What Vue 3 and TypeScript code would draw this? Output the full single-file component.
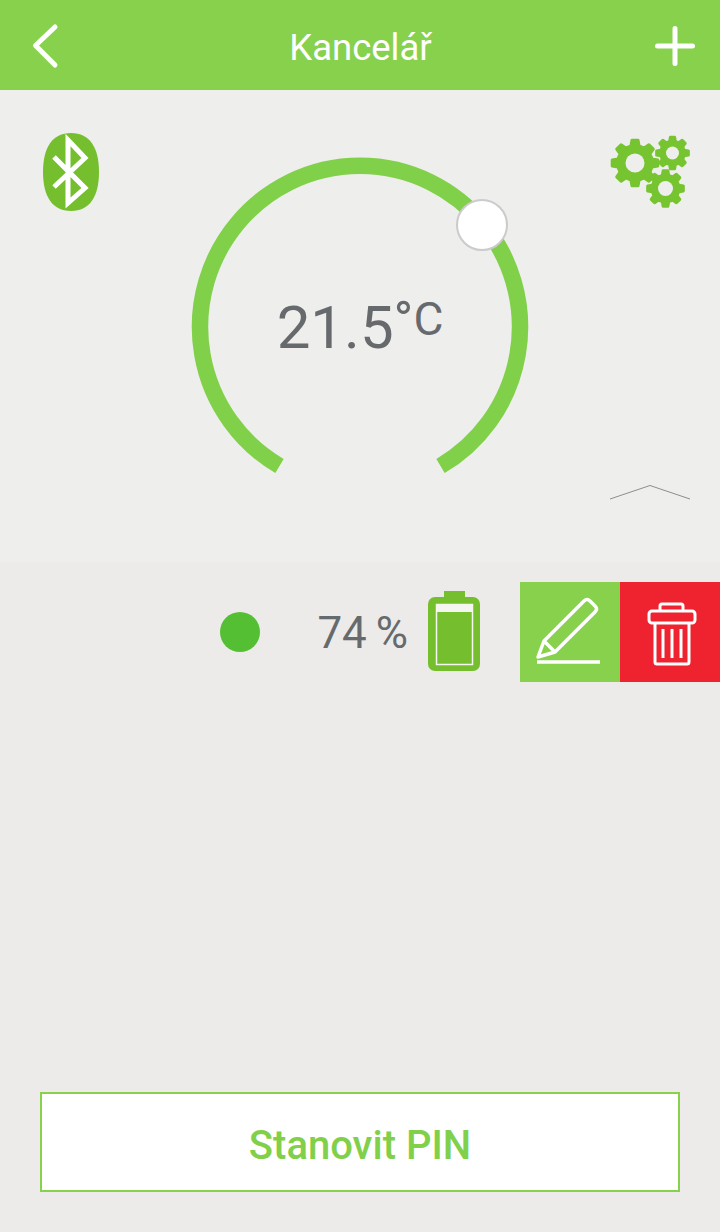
<script setup lang="ts">
// builds a cog outline with flat-topped teeth, hole is added by the caller
function gearPath(cx: number, cy: number, outer: number, root: number, teeth: number): string {
  const step = (Math.PI * 2) / teeth;
  const pts: string[] = [];
  for (let i = 0; i < teeth; i++) {
    const a = i * step - Math.PI / 2;
    const offsets: [number, number][] = [
      [-0.3, root],
      [-0.17, outer],
      [0.17, outer],
      [0.3, root],
    ];
    for (const [off, r] of offsets) {
      const t = a + off * step;
      pts.push(`${(cx + Math.cos(t) * r).toFixed(2)} ${(cy + Math.sin(t) * r).toFixed(2)}`);
    }
  }
  return `M${pts.join('L')}Z`;
}

const gears = [
  { x: 25, y: 28, outer: 23, root: 17.5, hole: 9.5 },
  { x: 62.5, y: 18, outer: 16, root: 12, hole: 6.5 },
  { x: 55.5, y: 53.5, outer: 18, root: 13.5, hole: 7.5 },
].map((g) => ({ ...g, d: gearPath(g.x, g.y, g.outer, g.root, 8) }));
</script>

<template>
  <div class="screen">
    <header class="topbar">
      <svg class="topbar-icon" width="40" height="50" viewBox="0 0 40 50">
        <path d="M33 5 13.5 23.5 33 43" fill="none" stroke="#fff" stroke-width="5" stroke-linecap="round" stroke-linejoin="round" />
      </svg>
      <h1 class="title">Kancelář</h1>
      <svg class="topbar-icon" width="40" height="50" viewBox="0 0 40 50">
        <path d="M20 6.5v35M2.5 24h35" fill="none" stroke="#fff" stroke-width="5" stroke-linecap="round" />
      </svg>
    </header>

    <section class="thermostat">
      <svg class="bluetooth" width="58" height="80" viewBox="0 0 58 80">
        <path d="M29 1C48 1 57 16 57 40C57 64 48 79 29 79C10 79 1 64 1 40C1 16 10 1 29 1Z" fill="#75bf2e" />
        <path d="M12 25 43 56 26 71V8L43 26 12 55" fill="none" stroke="#fff" stroke-width="5" />
      </svg>

      <div class="dial">
        <svg width="360" height="340" viewBox="0 0 360 340">
          <path d="M99.5 316A160 161 0 1 1 260.5 316" fill="none" stroke="#81d04a" stroke-width="16.5" />
        </svg>
        <div class="thumb"></div>
        <div class="temp">21.5<span class="deg">°</span><span class="unit">C</span></div>
      </div>

      <div class="side">
        <svg class="gears" width="80" height="76" viewBox="0 0 80 76">
          <g v-for="g in gears" :key="g.x">
            <path :d="g.d" fill="#76c430" stroke="#76c430" stroke-width="3" stroke-linejoin="round" />
            <circle :cx="g.x" :cy="g.y" :r="g.hole" fill="#eeeeed" />
          </g>
        </svg>
        <svg class="collapse" width="80" height="15" viewBox="0 0 80 15">
          <path d="M0 14 40 .5 80 14" fill="none" stroke="#8b8d8e" stroke-width="1" />
        </svg>
      </div>
    </section>

    <section class="details">
      <div class="device">
        <span class="status-dot"></span>
        <span class="percent">74 %</span>
        <svg class="battery" width="52" height="80" viewBox="0 0 52 80">
          <path d="M16 0h21v6H16z" fill="#75bf2e" />
          <rect y="6" width="52" height="74" rx="7" fill="#75bf2e" />
          <rect x="8.5" y="13.5" width="36" height="60" fill="none" stroke="#f4f6ef" stroke-width="1.5" />
          <rect x="8" y="13" width="37" height="8" fill="#f4f6ef" />
        </svg>
        <button class="action edit" type="button" aria-label="Upravit">
          <svg width="100" height="100" viewBox="0 0 100 100">
            <path d="M18 75 24 59 64 19Q67 16 70 19L75 24Q78 27 75 30L35 70ZM24 59 35 70" fill="none" stroke="#fff" stroke-width="3.5" stroke-linejoin="round" />
            <path d="M17 80h63" fill="none" stroke="#fff" stroke-width="3.5" />
          </svg>
        </button>
        <button class="action remove" type="button" aria-label="Smazat">
          <svg width="100" height="100" viewBox="0 0 100 100">
            <path d="M40 28V24Q40 22 42 22H61Q63 22 63 24V28" fill="none" stroke="#fff" stroke-width="3" />
            <rect x="29" y="29" width="46" height="12" rx="3" fill="none" stroke="#fff" stroke-width="3" />
            <path d="M35 41V80Q35 82 37 82H67Q69 82 69 80V41M43 47V76M52 47V76M61 47V76" fill="none" stroke="#fff" stroke-width="3" />
          </svg>
        </button>
      </div>

      <button class="pin-button" type="button">Stanovit PIN</button>
    </section>
  </div>
</template>

<style scoped>
.screen {
  display: flex;
  flex-direction: column;
  width: 720px;
  height: 1232px;
  font-family: Roboto, "Liberation Sans", sans-serif;
  background: #ecebea;
}

.topbar {
  display: flex;
  align-items: center;
  justify-content: space-between;
  height: 90px;
  padding: 0 25px 0 22px;
  box-sizing: border-box;
  background: #87d14c;
}

.topbar-icon {
  display: block;
  margin-top: 4px;
}

.title {
  margin: 4px 0 0 4px;
  font-size: 36.5px;
  font-weight: 400;
  color: #fff;
}

.thermostat {
  display: grid;
  grid-template-columns: 140px 360px 1fr;
  height: 472px;
  padding: 0 30px 0 40px;
  box-sizing: border-box;
  background: #eeeeed;
}

.bluetooth {
  display: block;
  margin: 42px 0 0 2px;
}

.dial {
  position: relative;
  height: 340px;
  margin-top: 60px;
}

.dial svg {
  display: block;
}

.thumb {
  position: absolute;
  left: 276px;
  top: 49px;
  width: 48px;
  height: 48px;
  border: 2px solid #cbcbcb;
  border-radius: 50%;
  background: #fff;
}

.temp {
  position: absolute;
  left: 0;
  right: 0;
  top: 143px;
  font-size: 60px;
  line-height: 70px;
  text-align: center;
  color: #676a6c;
}

.deg {
  position: relative;
  top: -9px;
  font-size: 53px;
}

.unit {
  position: relative;
  top: -13px;
  font-size: 46px;
}

.side {
  display: flex;
  flex-direction: column;
  align-items: flex-end;
  justify-content: space-between;
  height: 410px;
  padding-top: 45px;
  box-sizing: border-box;
}

.gears,
.collapse {
  display: block;
}

.details {
  flex: 1;
  display: flex;
  flex-direction: column;
  justify-content: space-between;
  padding-top: 20px;
  padding-bottom: 40px;
}

.device {
  display: flex;
  align-items: center;
  justify-content: flex-end;
  height: 100px;
}

.status-dot {
  width: 40px;
  height: 40px;
  border-radius: 50%;
  background: #55bf33;
}

.percent {
  margin-top: 2px;
  margin-left: 57px;
  font-size: 44px;
  word-spacing: -2px;
  color: #676a6c;
}

.battery {
  display: block;
  margin-left: 20px;
  margin-right: 40px;
  margin-bottom: 2px;
}

.action {
  width: 100px;
  height: 100px;
  padding: 0;
  border: 0;
}

.action svg {
  display: block;
}

.edit {
  background: #87d14c;
}

.remove {
  background: #ef2330;
}

.pin-button {
  height: 100px;
  margin: 0 40px;
  padding: 6px 0 0;
  border: 2px solid #87d14c;
  background: #fff;
  font-family: inherit;
  font-size: 40px;
  font-weight: 500;
  color: #81d04a;
}
</style>
